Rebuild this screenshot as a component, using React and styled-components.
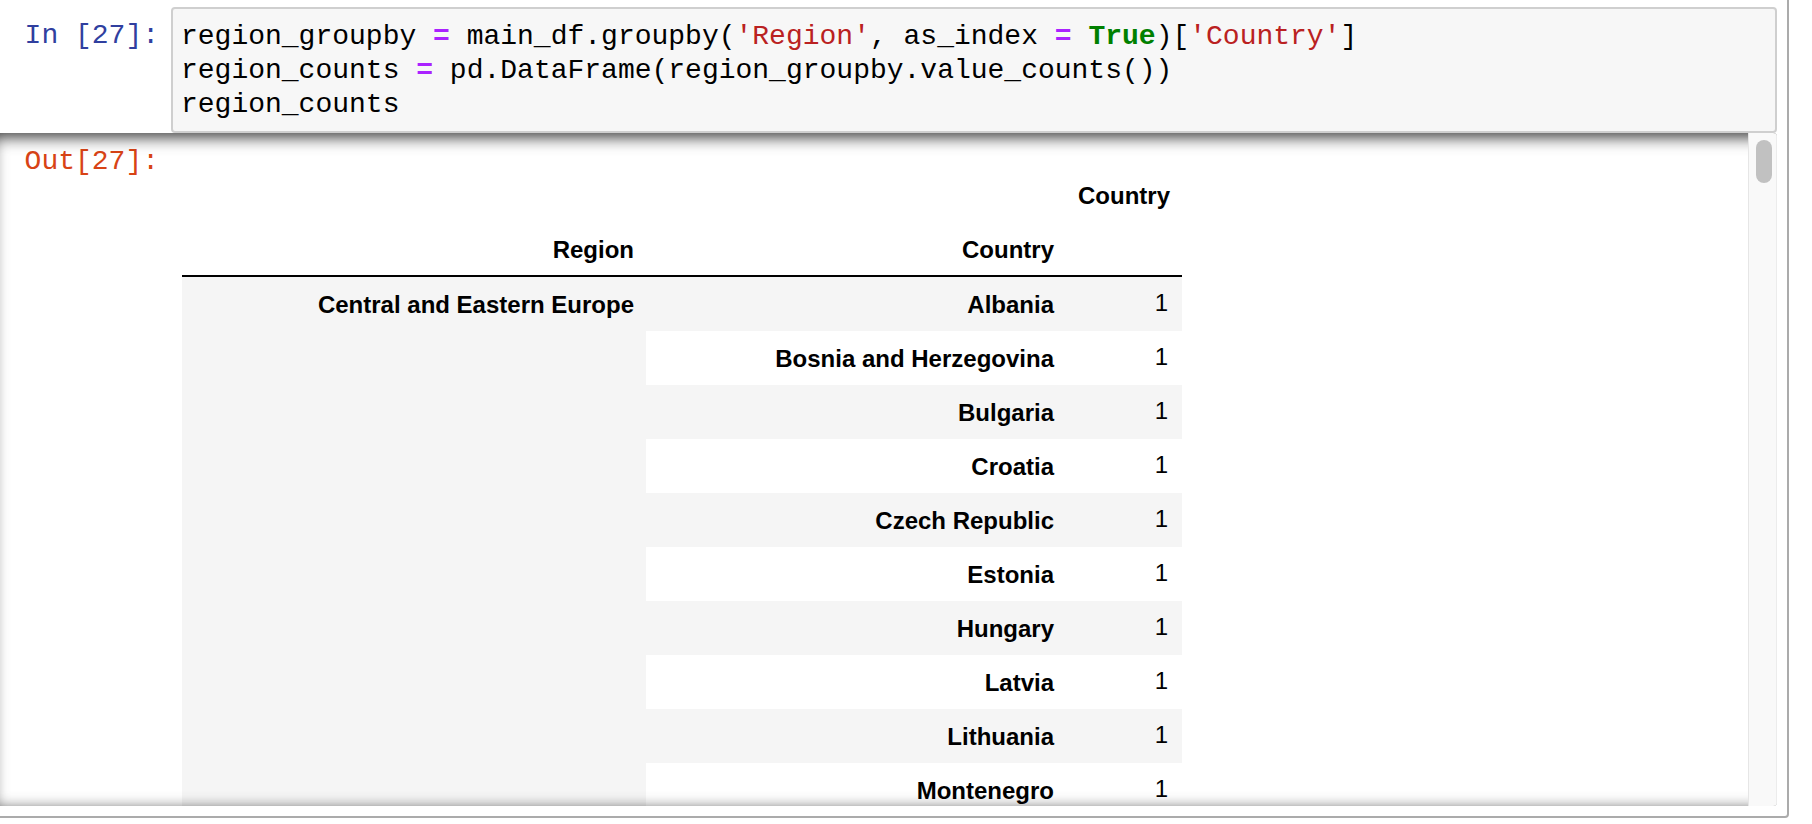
import React from "react";
import styled, { createGlobalStyle } from "styled-components";

const GlobalStyle = createGlobalStyle`
  html, body {
    margin: 0;
    padding: 0;
    background: #ffffff;
    overflow: hidden;
  }
`;

const countries = [
  "Albania",
  "Bosnia and Herzegovina",
  "Bulgaria",
  "Croatia",
  "Czech Republic",
  "Estonia",
  "Hungary",
  "Latvia",
  "Lithuania",
  "Montenegro",
];

const App = () => {
  return (
    <Page>
      <GlobalStyle />
      <Cell>
        <InputRow>
          <Prompt $kind="in">In [27]:</Prompt>
          <InputArea>
            <Code>
              {"region_groupby "}
              <Op>=</Op>
              {" main_df.groupby("}
              <Str>'Region'</Str>
              {", as_index "}
              <Op>=</Op>{" "}
              <Kw>True</Kw>
              {")["}
              <Str>'Country'</Str>
              {"]\n"}
              {"region_counts "}
              <Op>=</Op>
              {" pd.DataFrame(region_groupby.value_counts())\n"}
              {"region_counts"}
            </Code>
          </InputArea>
        </InputRow>

        <OutputScroll>
          <OutputRow>
            <Prompt $kind="out">Out[27]:</Prompt>
            <Subarea>
              <Table>
                <colgroup>
                  <Col $w={464} />
                  <Col $w={420} />
                  <Col $w={116} />
                </colgroup>
                <thead>
                  <tr>
                    <Th />
                    <Th />
                    <Th>Country</Th>
                  </tr>
                  <tr>
                    <Th>Region</Th>
                    <Th>Country</Th>
                    <Th />
                  </tr>
                </thead>
                <tbody>
                  {countries.map((c, i) => (
                    <BodyRow key={c}>
                      {i === 0 && (
                        <IndexTh rowSpan={countries.length}>
                          Central and Eastern Europe
                        </IndexTh>
                      )}
                      <IndexTh>{c}</IndexTh>
                      <Td>1</Td>
                    </BodyRow>
                  ))}
                </tbody>
              </Table>
            </Subarea>
          </OutputRow>
          <ScrollTrack>
            <ScrollThumb />
          </ScrollTrack>
        </OutputScroll>
      </Cell>
    </Page>
  );
};

export default App;

const Page = styled.div`
  width: 1812px;
  height: 824px;
  overflow: hidden;
  background: #ffffff;
`;

const Cell = styled.div`
  box-sizing: border-box;
  width: 1809px;
  margin: -5px 0 0 -20px;
  padding: 10px;
  border: 2px solid #ababab;
  border-radius: 4px;
  display: flex;
  flex-direction: column;
`;

const InputRow = styled.div`
  display: flex;
  align-items: flex-start;
`;

const Prompt = styled.div`
  box-sizing: border-box;
  flex: 0 0 179px;
  padding: 12px 12px 0 0;
  text-align: right;
  font-family: "Liberation Mono", monospace;
  font-size: 28px;
  line-height: 34px;
  white-space: pre;
  color: ${(p) => (p.$kind === "in" ? "#303f9f" : "#d84315")};
`;

const InputArea = styled.div`
  box-sizing: border-box;
  flex: 1;
  height: 126px;
  background: #f7f7f7;
  border: 2px solid #cfcfcf;
  border-radius: 4px;
  padding: 11px 8px 9px;
`;

const Code = styled.pre`
  margin: 0;
  font-family: "Liberation Mono", monospace;
  font-size: 28px;
  line-height: 34px;
  color: #000000;
  white-space: pre;
`;

const Op = styled.span`
  color: #aa22ff;
  font-weight: bold;
`;

const Str = styled.span`
  color: #ba2121;
`;

const Kw = styled.span`
  color: #008000;
  font-weight: bold;
`;

const OutputScroll = styled.div`
  position: relative;
  height: 673px;
  display: flex;
  overflow: hidden;
  border-radius: 4px;

  &::after {
    content: "";
    position: absolute;
    inset: 0;
    box-shadow: inset 0 4px 16px rgba(0, 0, 0, 0.8);
    pointer-events: none;
    z-index: 1;
  }
`;

const OutputRow = styled.div`
  flex: 1;
  display: flex;
  align-items: flex-start;
  overflow: hidden;
`;

const Subarea = styled.div`
  padding: 34px 0 0 11px;
`;

const Table = styled.table`
  table-layout: fixed;
  width: 1000px;
  border-collapse: collapse;
  border-spacing: 0;
  font-family: "Liberation Sans", Arial, sans-serif;
  font-size: 24px;
  color: #000000;

  thead {
    border-bottom: 2px solid #000000;
  }
`;

const Col = styled.col`
  width: ${(p) => p.$w}px;
`;

const Th = styled.th`
  box-sizing: border-box;
  height: 54px;
  padding: 14px 12px 10px;
  line-height: 30px;
  text-align: right;
  vertical-align: middle;
  font-weight: bold;
  white-space: nowrap;
`;

const BodyRow = styled.tr`
  &:nth-child(odd) {
    background: #f5f5f5;
  }
`;

const IndexTh = styled.th`
  box-sizing: border-box;
  height: 54px;
  padding: 13px 12px 11px;
  line-height: 30px;
  text-align: right;
  vertical-align: top;
  font-weight: bold;
  white-space: nowrap;
`;

const Td = styled.td`
  box-sizing: border-box;
  height: 54px;
  padding: 11px 14px 13px 12px;
  line-height: 30px;
  text-align: right;
  vertical-align: middle;
`;

const ScrollTrack = styled.div`
  position: relative;
  z-index: 2;
  box-sizing: border-box;
  flex: 0 0 29px;
  background: #f9f9f9;
  border-left: 1px solid #e6e6e6;
  border-right: 1px solid #ececec;
  padding: 7px 0 0 7px;
`;

const ScrollThumb = styled.div`
  width: 16px;
  height: 43px;
  border-radius: 8px;
  background: #c1c1c1;
`;
